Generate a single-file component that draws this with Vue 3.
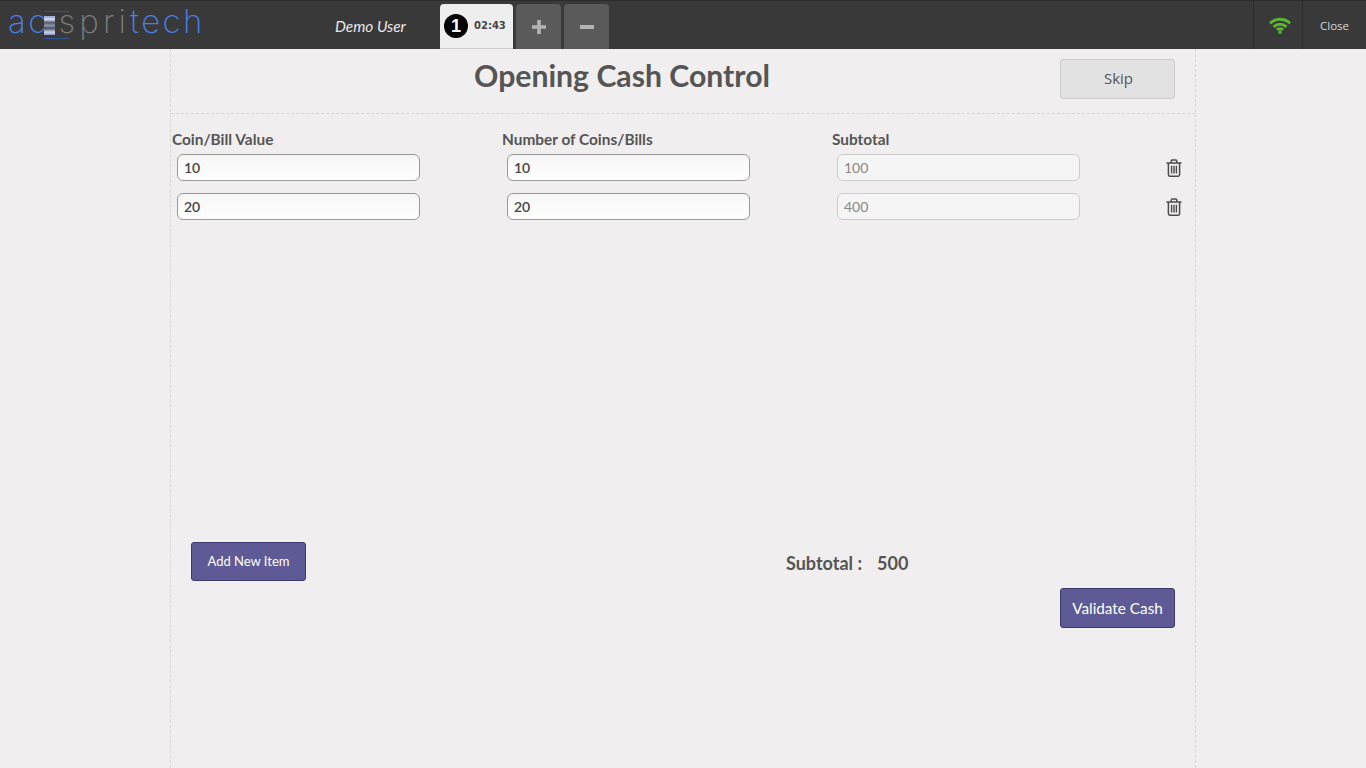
<script setup>
const rows = [
  { value: '10', count: '10', subtotal: '100' },
  { value: '20', count: '20', subtotal: '400' },
]
</script>

<template>
  <div class="page">
    <header class="topbar">
      <div class="logo">
        <span class="logo-blue first">ac</span>
        <span class="logo-mark"><i></i></span>
        <span class="logo-grey">spri</span>
        <span class="logo-blue">tech</span>
      </div>
      <div class="user">Demo User</div>
      <div class="tabs">
        <div class="tab">
          <span class="tab-num">1</span>
          <span class="tab-time">02:43</span>
        </div>
        <button class="tab-btn" aria-label="Add order">
          <svg width="14" height="14" viewBox="0 0 14 14"><path d="M5.2 0h3.6v5.2H14v3.6H8.8V14H5.2V8.8H0V5.2h5.2z" fill="#b4b4b4"/></svg>
        </button>
        <button class="tab-btn" aria-label="Remove order">
          <svg width="14" height="4" viewBox="0 0 14 4"><path d="M0 0h14v4H0z" fill="#b4b4b4"/></svg>
        </button>
      </div>
      <div class="status">
        <div class="status-cell wifi">
          <svg width="22" height="17" viewBox="0 0 22 17" fill="none" stroke="#5cb531" stroke-width="3">
            <path d="M1 6.4C6.6 1 15.4 1 21 6.4" />
            <path d="M4.6 9.8c3.6-3.3 9.2-3.3 12.8 0" />
            <path d="M7.9 12.9c1.9-1.4 4.3-1.4 6.2 0" />
            <circle cx="11" cy="15.2" r="1.7" fill="#5cb531" stroke="none" />
          </svg>
        </div>
        <div class="status-cell close">Close</div>
      </div>
    </header>

    <main class="sheet">
      <section class="head">
        <h1>Opening Cash Control</h1>
        <button class="skip">Skip</button>
      </section>

      <section class="table">
        <div class="labels">
          <span>Coin/Bill Value</span>
          <span>Number of Coins/Bills</span>
          <span>Subtotal</span>
        </div>
        <div v-for="(row, i) in rows" :key="i" class="row">
          <div class="cell"><input :value="row.value" /></div>
          <div class="cell"><input :value="row.count" /></div>
          <div class="cell"><input class="ro" :value="row.subtotal" disabled /></div>
          <svg class="trash" width="16" height="18" viewBox="0 0 16 18" fill="none" stroke="#4c4c4c">
            <path stroke-width="1.5" d="M.5 4h15M5.2 3.6V2.2c0-.7.4-1.3 1.1-1.3h3.4c.7 0 1.1.6 1.1 1.3v1.4" />
            <path stroke-width="1.5" d="M2.4 4v11.6c0 1 .5 1.6 1.4 1.6h8.4c.9 0 1.4-.6 1.4-1.6V4" />
            <path stroke-width="1.4" d="M5.6 6.8v7.8M8 6.8v7.8M10.4 6.8v7.8" />
          </svg>
        </div>
      </section>

      <section class="foot">
        <button class="primary add">Add New Item</button>
        <div class="total"><span>Subtotal :</span><span>500</span></div>
      </section>
      <div class="validate-row">
        <button class="primary validate">Validate Cash</button>
      </div>
    </main>
  </div>
</template>

<style>
html, body { margin: 0; height: 100%; overflow: hidden; background: #f0eeee; }
</style>

<style scoped>
.page {
  width: 1366px;
  height: 768px;
  display: flex;
  flex-direction: column;
  font-family: Lato, sans-serif;
  color: #555;
  background: #f0eeee;
  overflow: hidden;
}
.topbar {
  height: 48px;
  flex: none;
  display: flex;
  align-items: stretch;
  background: #393939;
  border-top: 1px solid #2b2b2b;
}
.logo {
  width: 335px;
  flex: none;
  box-sizing: border-box;
  padding: 0 0 7px 8px;
  display: flex;
  align-items: center;
  font-family: Inter, sans-serif;
  font-weight: 200;
  font-size: 33px;
  line-height: 1;
}
.logo-blue { color: #4a7fe6; letter-spacing: 2.4px; }
.logo-grey { color: #7c7c7c; letter-spacing: 4.1px; }
.logo-mark {
  width: 25px;
  height: 28px;
  margin: 7px -10px 0 -5px;
  box-sizing: border-box;
  border-top: 1px solid #30558f;
  border-bottom: 1px solid #30558f;
  display: flex;
  align-items: center;
}
.logo-mark i {
  display: block;
  width: 11px;
  height: 19px;
  background: linear-gradient(#8fa3d4, #d8dbe6 18%, #525a6e 35%, #8b93a8 50%, #4d5568 65%, #cfd5e6 85%, #7f95cc);
}
.user {
  width: 105px;
  flex: none;
  font-size: 15.4px;
  font-style: italic;
  color: #e8e8e8;
  line-height: 50px;
}
.tabs {
  display: flex;
  gap: 3px;
  padding-top: 3px;
}
.tab {
  width: 73px;
  box-sizing: border-box;
  padding-left: 4px;
  display: flex;
  align-items: center;
  gap: 6px;
  background: #eeeeee;
  border-radius: 4px 4px 0 0;
  border-bottom: 1px solid #ccc;
}
.tab-num {
  width: 24px;
  height: 24px;
  border-radius: 50%;
  background: #000;
  color: #fff;
  font-family: "Liberation Sans", sans-serif;
  font-weight: 700;
  font-size: 18px;
  line-height: 25px;
  text-align: center;
}
.tab-time {
  font-family: "DejaVu Sans", sans-serif;
  font-weight: 700;
  font-size: 10px;
  color: #444;
  margin-top: -2px;
}
.tab-btn {
  width: 45px;
  padding: 0;
  border: 0;
  border-radius: 4px 4px 0 0;
  background: #5a5a5a;
  display: flex;
  align-items: center;
  justify-content: center;
}
.status {
  margin-left: auto;
  display: flex;
}
.status-cell {
  display: flex;
  align-items: center;
  justify-content: center;
  border-left: 1px solid #2b2b2b;
}
.wifi { width: 49px; padding-left: 4px; box-sizing: border-box; }
.close {
  width: 63px;
  font-family: "Open Sans", sans-serif;
  font-size: 11.5px;
  color: #d8d8d8;
}
.sheet {
  width: 1026px;
  margin-left: 170px;
  box-sizing: border-box;
  flex: 1;
  border-left: 1px dashed #d6d6d6;
  border-right: 1px dashed #d6d6d6;
}
.head {
  height: 65px;
  box-sizing: border-box;
  display: flex;
  align-items: flex-start;
  border-bottom: 1px dashed #d6d6d6;
}
.head h1 {
  margin: 7px 0 0 303px;
  font-size: 30.2px;
  line-height: 38px;
  font-weight: 700;
  color: #555;
  white-space: nowrap;
}
.skip {
  margin: 10px 20px 0 auto;
  width: 115px;
  height: 40px;
  box-sizing: border-box;
  padding: 0 0 2px 2px;
  border: 1px solid #ccc;
  border-radius: 3px;
  background: #e2e2e2;
  font-family: "Open Sans", sans-serif;
  font-size: 15px;
  color: #555;
}
.table { padding: 15px 0 0 1px; }
.labels, .row {
  display: grid;
  grid-template-columns: 330px 330px 330px;
}
.labels {
  font-size: 15.4px;
  font-weight: 700;
  line-height: 20px;
  color: #555;
  margin-bottom: 5px;
}
.row {
  position: relative;
  height: 27px;
  margin-bottom: 12px;
}
.cell { padding-left: 5px; }
input {
  width: 243px;
  height: 27px;
  box-sizing: border-box;
  padding: 0 6px 1px;
  border: 1px solid #999;
  border-radius: 6px;
  background: linear-gradient(#f6f6f6, #fff);
  font-family: Lato, sans-serif;
  font-size: 14px;
  font-weight: 600;
  color: #444;
  outline: none;
}
input.ro {
  border-color: #ccc;
  background: #f5f5f5;
  color: #888;
  font-weight: 400;
  opacity: 1;
}
.trash {
  position: absolute;
  left: 994px;
  top: 5px;
}
.foot {
  display: flex;
  align-items: flex-start;
  margin-top: 322px;
  padding-left: 20px;
}
.primary {
  width: 115px;
  box-sizing: border-box;
  border: 1px solid #3e3a6e;
  border-radius: 3px;
  background: #5e5a96;
  color: #fff;
  font-family: Lato, sans-serif;
}
.add {
  height: 39px;
  padding: 0 0 2px;
  font-size: 13px;
}
.total {
  margin: 9px 0 0 480px;
  display: flex;
  gap: 15px;
  font-size: 18px;
  font-weight: 700;
  line-height: 24px;
  color: #555;
}
.validate-row {
  display: flex;
  justify-content: flex-end;
  padding-right: 20px;
  margin-top: 7px;
}
.validate {
  height: 40px;
  font-size: 15.3px;
}
</style>
